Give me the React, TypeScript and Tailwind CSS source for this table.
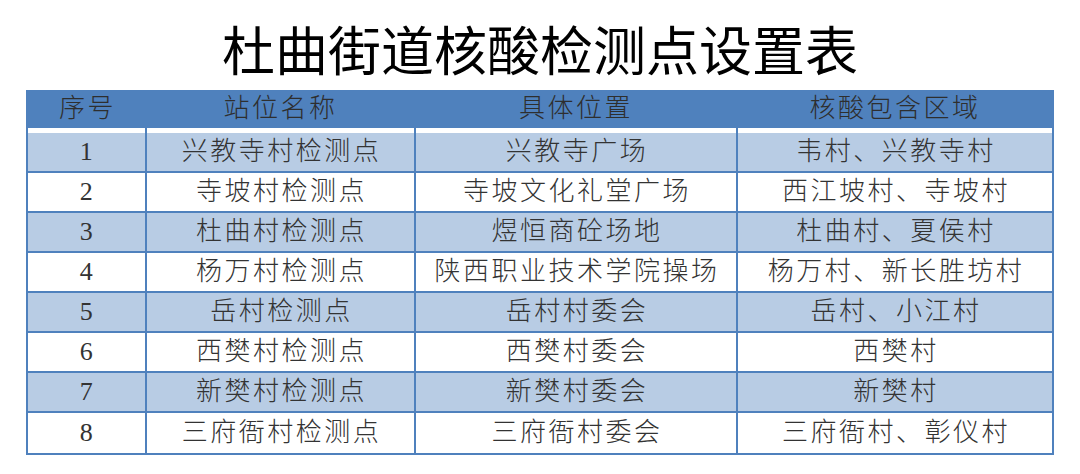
import React from "react";

const rows = [
  ["1", "兴教寺村检测点", "兴教寺广场", "韦村、兴教寺村"],
  ["2", "寺坡村检测点", "寺坡文化礼堂广场", "西江坡村、寺坡村"],
  ["3", "杜曲村检测点", "煜恒商砼场地", "杜曲村、夏侯村"],
  ["4", "杨万村检测点", "陕西职业技术学院操场", "杨万村、新长胜坊村"],
  ["5", "岳村检测点", "岳村村委会", "岳村、小江村"],
  ["6", "西樊村检测点", "西樊村委会", "西樊村"],
  ["7", "新樊村检测点", "新樊村委会", "新樊村"],
  ["8", "三府衙村检测点", "三府衙村委会", "三府衙村、彰仪村"],
];

const cols = "grid grid-cols-[117px_269px_322px_1fr]";

export default function App() {
  return (
    <div className="w-[1080px] h-[474px] bg-white overflow-hidden">
      {/* Title */}
      <div className="h-[90px] flex items-center justify-center pt-[6px]">
        <h1 className="text-[53px] leading-none text-black font-['Noto_Sans_CJK_SC',sans-serif]">
          杜曲街道核酸检测点设置表
        </h1>
      </div>

      {/* Table */}
      <div className="ml-[26px] w-[1028px] border-x-2 border-b-2 border-[#4f81bd] font-['Liberation_Serif','Noto_Sans_CJK_SC',serif] font-light text-[26px] tracking-[2.5px] text-[#333333]">
        <div className={`${cols} h-[38px] bg-[#4f81bd] text-[#2e2e2e]`}>
          {["序号", "站位名称", "具体位置", "核酸包含区域"].map((h) => (
            <div key={h} className="flex items-center justify-center leading-none pl-[2px]">
              {h}
            </div>
          ))}
        </div>
        <div className={`${cols} h-[5px] bg-white`}>
          <div />
          <div className="border-l-2 border-[#4f81bd]" />
          <div className="border-l-2 border-[#4f81bd]" />
          <div className="border-l-2 border-[#4f81bd]" />
        </div>
        {rows.map((r, i) => (
          <div
            key={r[0]}
            className={`${cols} h-[40px] ${i < rows.length - 1 ? "border-b-2" : ""} border-[#4f81bd] ${
              i % 2 === 0 ? "bg-[#b8cce4]" : "bg-white"
            }`}
          >
            {r.map((c, j) => (
              <div
                key={j}
                className={`flex items-center justify-center leading-none pl-[2px] ${
                  j > 0 ? "border-l-2 border-[#4f81bd]" : ""
                }`}
              >
                {c}
              </div>
            ))}
          </div>
        ))}
      </div>
    </div>
  );
}
